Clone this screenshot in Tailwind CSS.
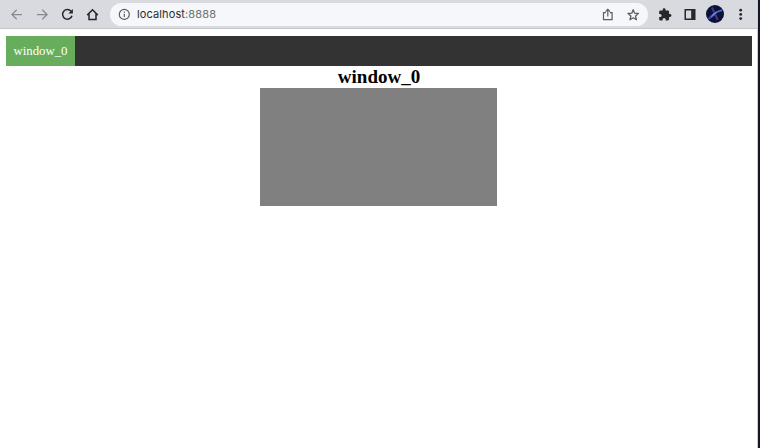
<!DOCTYPE html>
<html lang="en">
<head>
<meta charset="utf-8">
<title>localhost:8888</title>
<script src="https://cdn.jsdelivr.net/npm/@tailwindcss/browser@4"></script>
</head>
<body class="flex h-screen w-screen overflow-hidden bg-white">
<div class="flex h-full min-w-0 flex-1 flex-col border-r border-[#d0d0d2]">
  <header class="flex h-[29px] shrink-0 items-center border-b border-[#c4c4c9] bg-[#d9dadf] pl-[10px] pr-[10px]">
    <svg class="h-[14px] w-[14px] shrink-0" viewBox="0 0 14 14" fill="none" stroke="#888a8e" stroke-width="1.25"><path d="M12 7.500H2M6.700 2.700 1.900 7.500l4.800 4.800"/></svg>
    <svg class="ml-[11px] h-[14px] w-[14px] shrink-0" viewBox="0 0 14 14" fill="none" stroke="#888a8e" stroke-width="1.25"><path d="M2 7.500h10M7.300 2.700 12.100 7.500l-4.800 4.800"/></svg>
    <svg class="ml-[11px] h-[14px] w-[14px] shrink-0" viewBox="0 0 14 14" fill="none" stroke="#26272b" stroke-width="1.5"><path d="M12 8.700A4.800 4.800 0 1 1 11.200 4.400"/><path d="M12.900 2v4.500H8.400z" fill="#26272b" stroke="none"/></svg>
    <svg class="ml-[11px] h-[14px] w-[14px] shrink-0" viewBox="0 0 14 14" fill="none" stroke="#26272b" stroke-width="1.5"><path d="M2.200 8.100 7.500 2.800l5.300 5.300M4 7v5.400h7V7"/></svg>
    <div class="ml-[11px] flex h-[23px] w-[538px] shrink-0 items-center rounded-full bg-[#f6f7fa] pl-2 pr-2">
      <svg class="h-3 w-3 shrink-0" viewBox="0 0 12 12" fill="none" stroke="#5b5d61" stroke-width="1.2"><circle cx="6.300" cy="6.400" r="5"/><path d="M6.300 5.700V9M6.300 3.400v1.300"/></svg>
      <span class="ml-[7px] font-['Inter','Liberation_Sans',sans-serif] text-[11px] leading-[14px] tracking-[0.12px] text-[#292a2e]">localhost<span class="text-[#707276]">:8888</span></span>
      <svg class="ml-auto h-[14px] w-[12px]" viewBox="0 0 12 14" fill="none" stroke="#5b5d61" stroke-width="1.2"><path d="M3.800 5.700H1.500v6.900h8.600V5.700H7.800M5.800 9.600V2.500M3.500 4.700l2.300-2.300 2.300 2.300"/></svg>
      <svg class="ml-[13px] h-[13px] w-[13px]" viewBox="0 0 13 13" fill="none" stroke="#5b5d61" stroke-width="1.3" stroke-linejoin="round"><path d="m6.200 1.700 1.400 3.500 3.800.3-2.900 2.500.9 3.700-3.200-2-3.200 2 .9-3.700L1 5.500l3.800-.3z"/></svg>
    </div>
    <svg class="ml-[10px] h-[14px] w-[14px] shrink-0" viewBox="0 0 24 24" fill="#26272b"><path d="M20.5 12H19V8a2 2 0 0 0-2-2h-4V4.500a2.500 2.500 0 0 0-5 0V6H4a2 2 0 0 0-2 2v3.800h1.500a2.700 2.700 0 0 1 0 5.400H2V21a2 2 0 0 0 2 2h3.800v-1.500a2.700 2.700 0 0 1 5.400 0V23H17a2 2 0 0 0 2-2v-4h1.500a2.500 2.500 0 0 0 0-5z"/></svg>
    <svg class="ml-[12px] h-3 w-3 shrink-0" viewBox="0 0 12 12"><path fill="#26272b" fill-rule="evenodd" d="M.5 1h11v11H.5zM2 2.500v8h5.200v-8z"/></svg>
    <svg class="ml-[10px] h-[18px] w-[18px] shrink-0" viewBox="0 0 18 18" fill="none"><circle cx="9" cy="9" r="9" fill="#0c1236"/><path d="M6 2.500 11.800 15" stroke="#473482" stroke-width="2"/><path d="M2.200 14 8.500 9" stroke="#383c9d" stroke-width="2.500"/><path d="M5 12.300C7.500 8.500 11.500 6.200 16.200 5.300" stroke="#3d7de2" stroke-width="1.500"/><path d="m6.500 10.500 4-2.900" stroke="#b28bea"/></svg>
    <svg class="ml-[14px] h-[14px] w-[5px] shrink-0" viewBox="0 0 5 14" fill="#26272b"><circle cx="2.700" cy="3.200" r="1.400"/><circle cx="2.700" cy="7.400" r="1.400"/><circle cx="2.700" cy="11.600" r="1.400"/></svg>
  </header>
  <main class="flex flex-col pl-[6px] pr-[5px] pt-[7px] font-['Liberation_Serif',serif]">
    <nav class="flex h-[30px] bg-[#333333]">
      <a class="flex h-full w-[69px] items-center justify-center bg-[#68ad5c] pt-px text-[12.8px] leading-[15px] text-white">window_0</a>
    </nav>
    <section class="flex flex-col items-center pr-px">
      <h1 class="h-[22px] pl-px text-[19px] font-bold leading-[22px] text-black">window_0</h1>
      <div class="h-[118px] w-[237px] bg-[#808080]"></div>
    </section>
  </main>
</div>
<div class="h-full w-[2px] shrink-0 bg-[#12172f]"></div>
</body>
</html>
